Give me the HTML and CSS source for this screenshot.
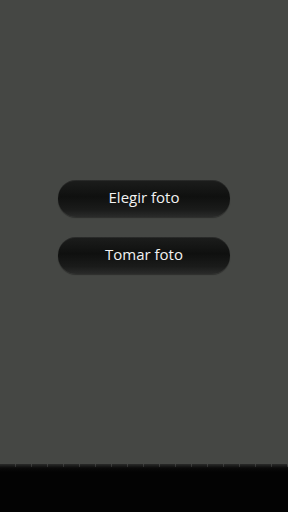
FILE: index.html
```html
<!DOCTYPE html>
<html lang="es">

<head>
    <meta charset="UTF-8">
    <meta name="viewport" content="width=device-width, initial-scale=1.0">
    <title>Foto</title>
    <link rel="stylesheet" href="styles.css">
</head>

<body>
    <div class="screen">
        <!-- Botones de seleccion -->
        <div class="actions">
            <button class="btn">Elegir foto</button>
            <button class="btn">Tomar foto</button>
        </div>
    </div>

    <!-- Barra inferior -->
    <div class="bottom-bar"></div>
</body>

</html>
```

FILE: styles.css
```css
body {
    font-family: "Open Sans", Roboto, sans-serif;
    background-color: #454744;
    margin: 0;
    padding: 0;
    width: 288px;
    height: 512px;
    overflow: hidden;
    display: flex;
    flex-direction: column;
}

.screen {
    flex: 1;
}

.actions {
    display: flex;
    flex-direction: column;
    align-items: center;
    gap: 20px;
    padding-top: 180px;
}

.btn {
    width: 172px;
    height: 37px;
    border: none;
    border-radius: 18px;
    background: linear-gradient(to bottom, #1c1d1c 0%, #0f100f 45%, #1a1b1a 80%, #2a2b2a 100%);
    box-shadow: 0 1px 1px rgba(0, 0, 0, 0.35), inset 0 1px 0 rgba(255, 255, 255, 0.06);
    color: #f2f2f2;
    font-family: "Open Sans", Roboto, sans-serif;
    font-size: 15px;
    padding: 0 0 3px;
}

.bottom-bar {
    height: 48px;
    background:
        repeating-linear-gradient(to right, transparent 0, transparent 15px, rgba(255, 255, 255, 0.12) 15px, rgba(255, 255, 255, 0.12) 16px) top / 100% 3px no-repeat,
        linear-gradient(to bottom, #2a2b2a 0px, #0a0a0a 4px, #030303 8px);
}
```
